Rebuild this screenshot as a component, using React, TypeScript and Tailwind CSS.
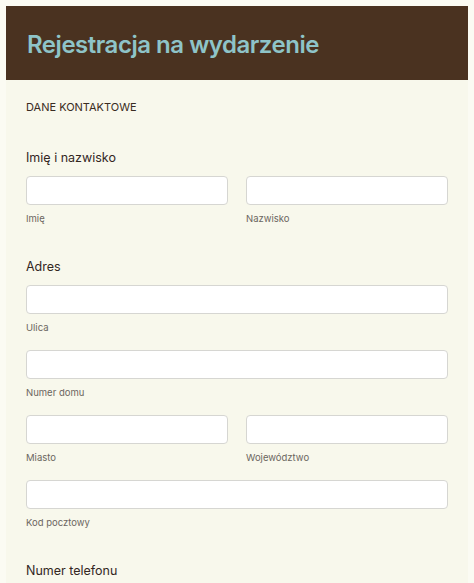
import React from "react";

const Field = ({ label }: { label: string }) => (
  <div className="flex flex-col">
    <input className="h-[29px] w-full rounded-[4px] border border-[#d6d6d2] bg-white" />
    <span className="mt-[7px] h-[14px] text-[9.5px] leading-[14px] text-[#6b6660]">{label}</span>
  </div>
);

export default function App() {
  return (
    <div className="min-h-[583px] bg-[#fbfbf3] p-[6px] pb-0 font-['Inter',sans-serif]">
      <div className="bg-[#f8f8ec]">
        <div className="flex h-[74px] items-center bg-[#4a3220] px-[21px] pt-[3px]">
          <h1 className="text-[24px] font-semibold tracking-[-0.02em] text-[#8ec4c8]">
            Rejestracja na wydarzenie
          </h1>
        </div>
        <div className="px-[20px] pt-[19px] pb-4">
          <div className="h-4 text-[11px] leading-4 text-[#3a2c22]">DANE KONTAKTOWE</div>

          <div className="mt-[33px] h-5 text-[12.5px] leading-5 text-[#33271f]">Imię i nazwisko</div>
          <div className="mt-2 grid grid-cols-2 gap-[18px]">
            <Field label="Imię" />
            <Field label="Nazwisko" />
          </div>

          <div className="mt-[31px] h-5 text-[12.5px] leading-5 text-[#33271f]">Adres</div>
          <div className="mt-2 flex flex-col gap-[15px]">
            <Field label="Ulica" />
            <Field label="Numer domu" />
            <div className="grid grid-cols-2 gap-[18px]">
              <Field label="Miasto" />
              <Field label="Województwo" />
            </div>
            <Field label="Kod pocztowy" />
          </div>

          <div className="mt-[31px] h-5 text-[12.5px] leading-5 text-[#33271f]">Numer telefonu</div>
        </div>
      </div>
    </div>
  );
}
